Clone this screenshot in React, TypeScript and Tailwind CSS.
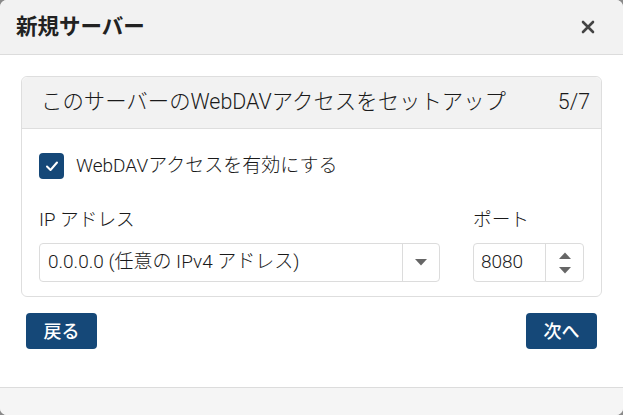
import React from "react";

const font = { fontFamily: 'Roboto, "Noto Sans CJK JP", sans-serif' };

export default function App() {
  return (
    <div className="w-[623px] h-[415px] bg-[#8a8a8a] overflow-hidden" style={font}>
      <div className="w-[623px] h-[415px] bg-white rounded-[7px] overflow-hidden flex flex-col">
        <div className="h-[55px] shrink-0 bg-[#f2f2f2] border-b border-[#dcdcdc] flex items-center justify-between pl-[16px] pr-[28px]">
          <div className="text-[21.5px] font-bold text-[#222]">新規サーバー</div>
          <svg width="14" height="14" viewBox="0 0 14 14">
            <path d="M2 2 L12 12 M12 2 L2 12" stroke="#444" strokeWidth="2.6" strokeLinecap="round" />
          </svg>
        </div>
        <div className="px-[21px] pt-[21px]">
          <div className="border border-[#dedede] rounded-[6px] font-light">
            <div className="h-[52px] bg-[#f2f2f2] border-b border-[#dedede] rounded-t-[6px] flex items-center justify-between pl-[19px] pr-[11px]">
              <div className="text-[21.4px] text-[#1a1a1a]">このサーバーのWebDAVアクセスをセットアップ</div>
              <div className="text-[21.4px] text-[#1a1a1a]">5/7</div>
            </div>
            <div className="pl-[17px] pr-[16px] pt-[24px] pb-[14px]">
              <div className="flex items-center gap-[12px] h-[26px]">
                <div className="w-[25px] h-[26px] rounded-[4px] bg-[#154878] flex items-center justify-center">
                  <svg width="16" height="16" viewBox="0 0 16 16">
                    <path d="M3 8.5 L6.5 12 L13 4.5" stroke="white" strokeWidth="2" fill="none" strokeLinecap="round" strokeLinejoin="round" />
                  </svg>
                </div>
                <div className="text-[19px] text-[#1a1a1a]">WebDAVアクセスを有効にする</div>
              </div>
              <div className="flex gap-[33px] mt-[28px]">
                <div className="w-[401px]">
                  <div className="text-[18.7px] text-[#1a1a1a] leading-[26px]">IP アドレス</div>
                  <div className="mt-[10px] h-[39px] border border-[#dcdcdc] rounded-[4px] flex items-center">
                    <div className="flex-1 pl-[8px] text-[19px] text-[#1a1a1a]">0.0.0.0 (任意の IPv4 アドレス)</div>
                    <div className="w-[37px] h-full border-l border-[#dcdcdc] flex items-center justify-center">
                      <svg width="12" height="7" viewBox="0 0 12 7"><path d="M0 0 H12 L6 6.5 Z" fill="#666" /></svg>
                    </div>
                  </div>
                </div>
                <div className="w-[111px]">
                  <div className="text-[18.7px] text-[#1a1a1a] leading-[26px]">ポート</div>
                  <div className="mt-[10px] h-[39px] border border-[#dcdcdc] rounded-[4px] flex items-center">
                    <div className="flex-1 pl-[7px] text-[19px] text-[#1a1a1a]">8080</div>
                    <div className="w-[38px] h-full border-l border-[#dcdcdc] flex flex-col items-center justify-center gap-[8px]">
                      <svg width="12" height="7" viewBox="0 0 12 7"><path d="M0 7 H12 L6 0.5 Z" fill="#666" /></svg>
                      <svg width="12" height="7" viewBox="0 0 12 7"><path d="M0 0 H12 L6 6.5 Z" fill="#666" /></svg>
                    </div>
                  </div>
                </div>
              </div>
            </div>
          </div>
          <div className="flex justify-between px-[5px] mt-[16px]">
            <button className="w-[71px] h-[36px] rounded-[4px] bg-[#154878] text-white text-[18px] font-medium flex items-center justify-center">戻る</button>
            <button className="w-[71px] h-[36px] rounded-[4px] bg-[#154878] text-white text-[18px] font-medium flex items-center justify-center">次へ</button>
          </div>
        </div>
        <div className="mt-auto h-[28px] bg-[#f5f5f5] border-t border-[#dcdcdc]" />
      </div>
    </div>
  );
}
